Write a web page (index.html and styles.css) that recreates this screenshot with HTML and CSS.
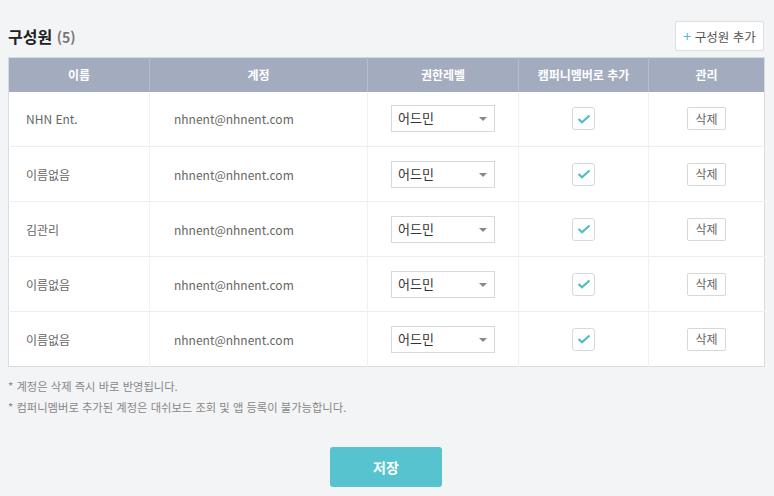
FILE: index.html
```html
<!DOCTYPE html>
<html lang="ko">
<head>
<meta charset="utf-8">
<title>구성원</title>
<link rel="stylesheet" href="styles.css">
</head>
<body>
<div class="page">
  <div class="head">
    <h2 class="title">구성원 <span class="count">(5)</span></h2>
    <button class="add-btn"><span class="plus">+</span> 구성원 추가</button>
  </div>
  <table class="members">
    <colgroup>
      <col class="c1"><col class="c2"><col class="c3"><col class="c4"><col class="c5">
    </colgroup>
    <thead>
      <tr><th>이름</th><th>계정</th><th>권한레벨</th><th>캠퍼니멤버로 추가</th><th>관리</th></tr>
    </thead>
    <tbody>
      <tr>
        <td class="name">NHN Ent.</td>
        <td class="email">nhnent@nhnent.com</td>
        <td class="level"><div class="select">어드민<span class="caret"></span></div></td>
        <td class="center"><span class="check"><svg width="14" height="10" viewBox="0 0 14 10"><path d="M1.5 5 L5 8.3 L12.5 1.5" fill="none" stroke="#4fbcc6" stroke-width="2.2"/></svg></span></td>
        <td class="center"><button class="del">삭제</button></td>
      </tr>
      <tr>
        <td class="name">이름없음</td>
        <td class="email">nhnent@nhnent.com</td>
        <td class="level"><div class="select">어드민<span class="caret"></span></div></td>
        <td class="center"><span class="check"><svg width="14" height="10" viewBox="0 0 14 10"><path d="M1.5 5 L5 8.3 L12.5 1.5" fill="none" stroke="#4fbcc6" stroke-width="2.2"/></svg></span></td>
        <td class="center"><button class="del">삭제</button></td>
      </tr>
      <tr>
        <td class="name">김관리</td>
        <td class="email">nhnent@nhnent.com</td>
        <td class="level"><div class="select">어드민<span class="caret"></span></div></td>
        <td class="center"><span class="check"><svg width="14" height="10" viewBox="0 0 14 10"><path d="M1.5 5 L5 8.3 L12.5 1.5" fill="none" stroke="#4fbcc6" stroke-width="2.2"/></svg></span></td>
        <td class="center"><button class="del">삭제</button></td>
      </tr>
      <tr>
        <td class="name">이름없음</td>
        <td class="email">nhnent@nhnent.com</td>
        <td class="level"><div class="select">어드민<span class="caret"></span></div></td>
        <td class="center"><span class="check"><svg width="14" height="10" viewBox="0 0 14 10"><path d="M1.5 5 L5 8.3 L12.5 1.5" fill="none" stroke="#4fbcc6" stroke-width="2.2"/></svg></span></td>
        <td class="center"><button class="del">삭제</button></td>
      </tr>
      <tr>
        <td class="name">이름없음</td>
        <td class="email">nhnent@nhnent.com</td>
        <td class="level"><div class="select">어드민<span class="caret"></span></div></td>
        <td class="center"><span class="check"><svg width="14" height="10" viewBox="0 0 14 10"><path d="M1.5 5 L5 8.3 L12.5 1.5" fill="none" stroke="#4fbcc6" stroke-width="2.2"/></svg></span></td>
        <td class="center"><button class="del">삭제</button></td>
      </tr>
    </tbody>
  </table>
  <ul class="notes">
    <li>* 계정은 삭제 즉시 바로 반영됩니다.</li>
    <li>* 컴퍼니멤버로 추가된 계정은 대쉬보드 조회 및 앱 등록이 불가능합니다.</li>
  </ul>
  <div class="actions"><button class="save">저장</button></div>
</div>
</body>
</html>
```

FILE: styles.css
```css
* { box-sizing: border-box; }
html, body { margin: 0; padding: 0; }
body {
  background: #f3f4f6;
  font-family: "Noto Sans CJK KR", "Noto Sans", sans-serif;
  color: #555;
}
.page {
  padding: 21px 10px 0 8px;
}
.head {
  display: flex;
  justify-content: space-between;
  align-items: flex-end;
  height: 36px;
}
.title {
  margin: 0 0 10px 0;
  font-size: 16px;
  font-weight: 700;
  color: #222;
  line-height: 20px;
}
.count {
  font-size: 14px;
  color: #777;
  font-weight: 700;
}
.add-btn {
  align-self: flex-start;
  width: 89px;
  height: 30px;
  background: #fff;
  border: 1px solid #dcdfe4;
  border-radius: 2px;
  font-family: inherit;
  font-size: 12.5px;
  color: #555;
  padding: 0;
  line-height: 26px;
}
.plus { color: #4fbcc6; font-size: 14px; }
.members {
  width: 756px;
  border-collapse: collapse;
  background: #fff;
  border: 1px solid #d8dbe0;
  table-layout: fixed;
}
.c1 { width: 141px; }
.c2 { width: 218px; }
.c3 { width: 151px; }
.c4 { width: 130px; }
.c5 { width: 116px; }
.members th {
  background: #a3acbf;
  color: #fff;
  font-size: 12px;
  font-weight: 700;
  height: 34px;
  padding: 0;
  border-left: 1px solid #b6bdcc;
}
.members th:first-child { border-left: none; }
.members td {
  height: 55px;
  padding: 0;
  font-size: 12px;
  color: #666;
  border-top: 1px solid #eceef1;
  border-left: 1px solid #f0f1f3;
}
.members td:first-child { border-left: none; }
.members tbody tr:first-child td { border-top: none; }
.name { padding-left: 17px !important; }
.email { padding-left: 24px !important; }
.level { padding-left: 23px !important; }
.center { text-align: center; }
.select {
  position: relative;
  width: 104px;
  height: 27px;
  border: 1px solid #d5d8dd;
  background: #fff;
  font-size: 13px;
  color: #333;
  line-height: 24px;
  padding-left: 6px;
}
.caret {
  position: absolute;
  right: 7px;
  top: 11px;
  width: 0; height: 0;
  border-left: 4px solid transparent;
  border-right: 4px solid transparent;
  border-top: 4px solid #888;
}
.check {
  display: inline-flex;
  align-items: center;
  justify-content: center;
  width: 23px;
  height: 23px;
  border: 1px solid #d5d8dd;
  border-radius: 3px;
  background: #fff;
  vertical-align: middle;
}
.del {
  width: 39px;
  height: 23px;
  background: #fff;
  border: 1px solid #d5d8dd;
  border-radius: 2px;
  font-family: inherit;
  font-size: 12px;
  color: #666;
  padding: 0;
  line-height: 20px;
}
.notes {
  list-style: none;
  margin: 9px 0 0 0;
  padding: 0;
  font-size: 11.3px;
  color: #888;
}
.notes li { line-height: 21px; }
.actions {
  display: flex;
  justify-content: center;
  margin-top: 29px;
}
.save {
  width: 112px;
  height: 40px;
  background: #56c3cf;
  color: #fff;
  border: none;
  border-radius: 3px;
  font-family: inherit;
  font-size: 14px;
  font-weight: 700;
}
```
